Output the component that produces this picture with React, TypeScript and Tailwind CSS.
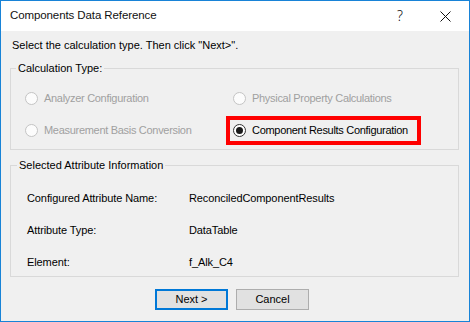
import React from "react";

const sans = "font-['Liberation_Sans',Arial,sans-serif]";

function Radio({ checked, disabled }: { checked?: boolean; disabled?: boolean }) {
  return (
    <span
      className={`flex h-[13px] w-[13px] shrink-0 items-center justify-center rounded-full border ${
        disabled ? "border-[#c4c4c4] bg-[#fcfcfc]" : "border-[#333333] bg-white"
      }`}
    >
      {checked && <span className="h-[7px] w-[7px] rounded-full bg-[#1a1a1a]" />}
    </span>
  );
}

function Option({ label, checked, disabled }: { label: string; checked?: boolean; disabled?: boolean }) {
  return (
    <div className="flex h-full items-center gap-[6px] whitespace-nowrap">
      <Radio checked={checked} disabled={disabled} />
      <span className={`tracking-[-0.3px] ${disabled ? "text-[#a0a0a0]" : "text-black"}`}>{label}</span>
    </div>
  );
}

function InfoRow({ label, value }: { label: string; value: string }) {
  return (
    <div className="grid h-[13px] grid-cols-[162px_auto] items-center tracking-[-0.1px]">
      <span>{label}</span>
      <span>{value}</span>
    </div>
  );
}

export default function App() {
  return (
    <div
      className={`flex h-[322px] w-[470px] flex-col border border-[#1883d7] bg-[#f0f0f0] text-[11px] leading-[13px] text-black ${sans}`}
    >
      {/* title bar */}
      <div className="flex h-[30px] shrink-0 items-center bg-white pl-[9px]">
        <span className="whitespace-nowrap text-[length:11.5px] leading-none tracking-[-0.1px] text-[#111]">
          Components Data Reference
        </span>
        <span className="ml-auto mr-[37px] font-['Noto_Sans',sans-serif] text-[14px] font-light leading-none text-[#111]">
          ?
        </span>
        <svg width="11" height="11" viewBox="0 0 11 11" className="mr-[18px]">
          <path d="M0.5 0.5L10.5 10.5M10.5 0.5L0.5 10.5" stroke="#111" strokeWidth="1" />
        </svg>
      </div>

      <div className="pl-[11px] pt-[8px]">Select the calculation type. Then click "Next&gt;".</div>

      {/* calculation type */}
      <fieldset className="ml-[9px] mt-[10px] w-[449px] border border-[#d9d9d9] px-0 pb-[4px] pt-[9px]">
        <legend className="ml-[5px] px-[2px] leading-[13px]">Calculation Type:</legend>
        <div className="grid grid-cols-[201px_195px] grid-rows-[29px_29px] gap-y-[3px] pl-[14px]">
          <Option label="Analyzer Configuration" disabled />
          <div className="pl-[7px]">
            <Option label="Physical Property Calculations" disabled />
          </div>
          <Option label="Measurement Basis Conversion" disabled />
          <div className="border-4 border-[#ff0000] pl-[3px]">
            <Option label="Component Results Configuration" checked />
          </div>
        </div>
      </fieldset>

      {/* attribute info */}
      <fieldset className="ml-[9px] mt-[9px] w-[449px] border border-[#d9d9d9] pb-[7px] pl-[16px] pt-[20px]">
        <legend className="ml-[-10px] px-[2px] leading-[13px]">Selected Attribute Information</legend>
        <div className="flex flex-col gap-[19px]">
          <InfoRow label="Configured Attribute Name:" value="ReconciledComponentResults" />
          <InfoRow label="Attribute Type:" value="DataTable" />
          <InfoRow label="Element:" value="f_Alk_C4" />
        </div>
      </fieldset>

      <div className="mt-[12px] flex gap-[8px] pl-[154px]">
        <button className="h-[21px] w-[73px] border border-[#0078d7] bg-[#e1e1e1] shadow-[inset_0_0_0_1px_#0078d7]">
          Next &gt;
        </button>
        <button className="h-[21px] w-[73px] border border-[#adadad] bg-[#e1e1e1]">Cancel</button>
      </div>
    </div>
  );
}
